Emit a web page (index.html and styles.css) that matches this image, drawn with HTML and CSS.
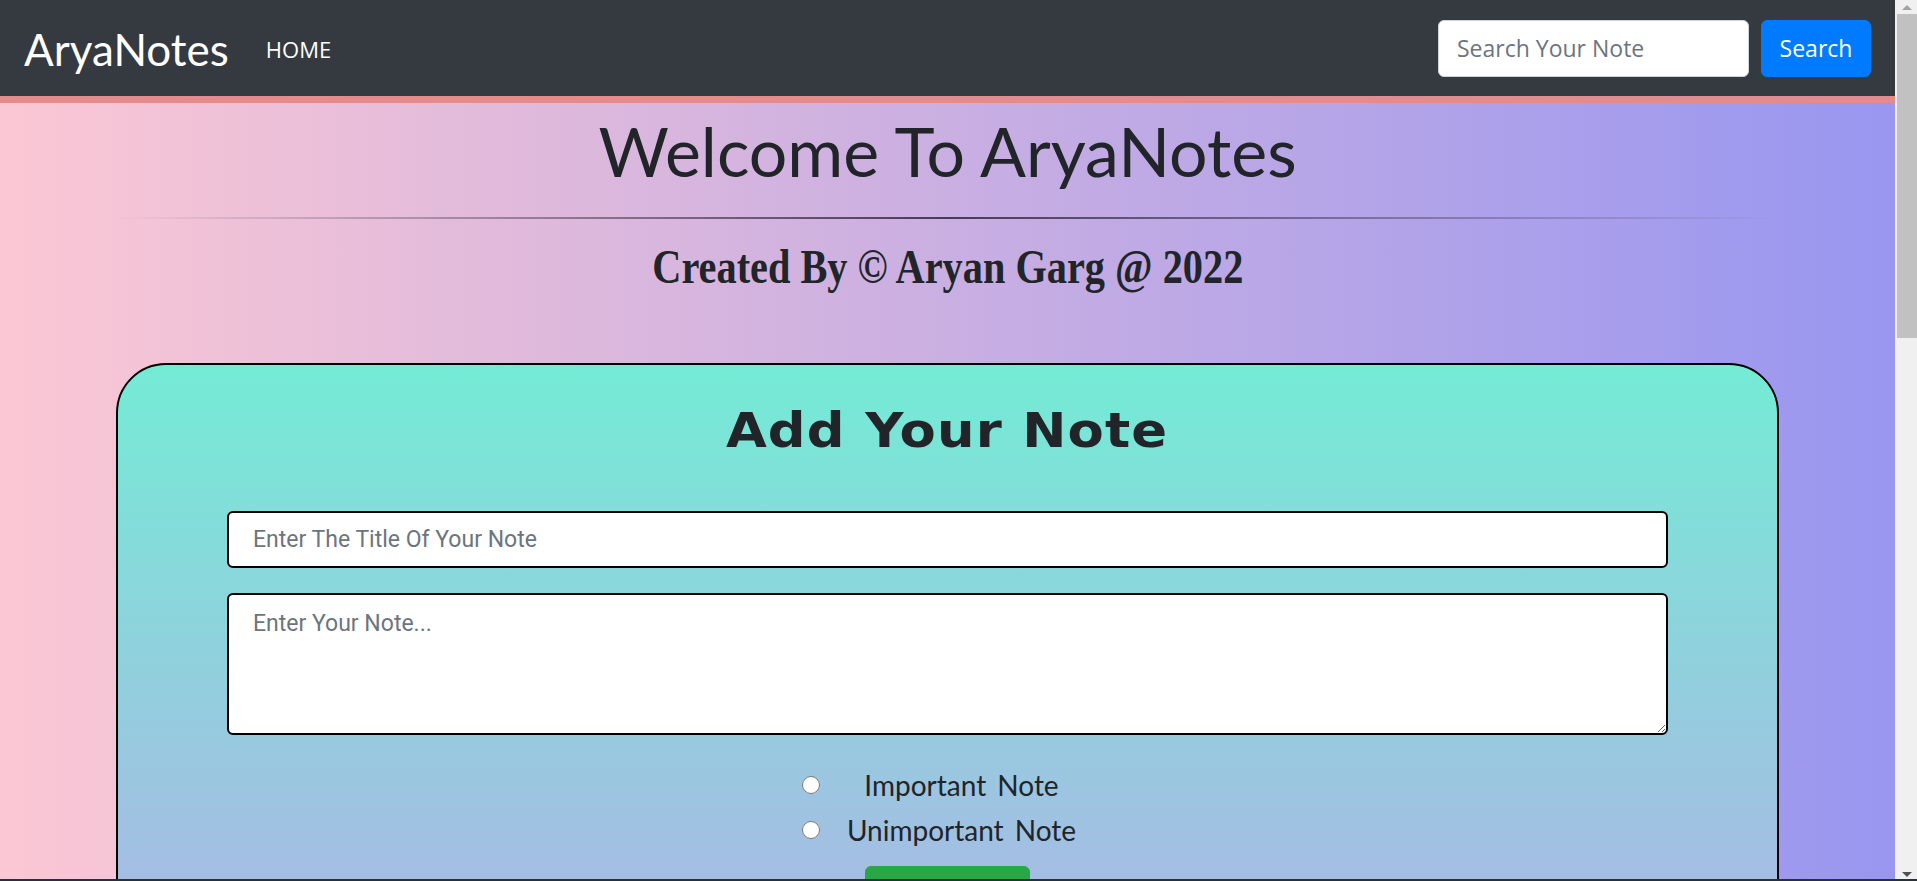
FILE: index.html
```html
<!DOCTYPE html>
<html lang="en">
<head>
<meta charset="utf-8">
<title>AryaNotes</title>
<link rel="stylesheet" href="styles.css">
</head>
<body>
<header class="navbar">
  <a class="brand" href="#">AryaNotes</a>
  <nav class="nav-links">
    <a class="nav-link" href="#">HOME</a>
  </nav>
  <form class="search-form">
    <input class="search-input" type="search" placeholder="Search Your Note">
    <button class="search-btn" type="button">Search</button>
  </form>
</header>

<main class="page">
  <section class="hero">
    <h1 class="hero-title">Welcome To AryaNotes</h1>
    <hr class="fancy-rule">
    <h2 class="hero-sub"><span class="hero-sub-text">Created By © Aryan Garg @ 2022</span></h2>
  </section>

  <section class="note-card">
    <h2 class="card-title"><span class="card-title-text">Add Your Note</span></h2>
    <input class="field title-field" type="text" placeholder="Enter The Title Of Your Note">
    <textarea class="field note-field" placeholder="Enter Your Note..."></textarea>
    <div class="radio-group">
      <label class="radio-row"><input class="radio" type="radio" name="imp"><span class="radio-label">Important Note</span></label>
      <label class="radio-row"><input class="radio" type="radio" name="imp"><span class="radio-label">Unimportant Note</span></label>
    </div>
    <div class="actions">
      <button class="add-btn" type="button">Add Note</button>
    </div>
  </section>

  <section class="notes-section">
    <h2 class="notes-title">Your Notes</h2>
    <div class="notes-grid">
      <article class="note-item"><h3 class="note-item-title">Shopping</h3><p class="note-item-text">Milk, bread and eggs.</p></article>
      <article class="note-item"><h3 class="note-item-title">Meeting</h3><p class="note-item-text">Project sync at 5 PM.</p></article>
      <article class="note-item"><h3 class="note-item-title">Ideas</h3><p class="note-item-text">Write a new blog post.</p></article>
    </div>
  </section>
</main>

<div class="fake-scrollbar" aria-hidden="true">
  <div class="sb-btn sb-up"><span class="sb-arrow-up"></span></div>
  <div class="sb-track"><div class="sb-thumb"></div></div>
  <div class="sb-btn sb-down"><span class="sb-arrow-down"></span></div>
</div>
<div class="window-edge" aria-hidden="true"></div>
</body>
</html>
```

FILE: styles.css
```css
* { box-sizing: border-box; }

html, body {
  margin: 0;
  padding: 0;
}

body {
  margin-right: 22px;
  background: linear-gradient(to right, #fbc7d4, #9796f0);
  font-family: "Open Sans", "Noto Sans", sans-serif;
  color: #212529;
}

/* ---------- fake classic scrollbar (window chrome) ---------- */
.fake-scrollbar {
  position: fixed;
  top: 0;
  right: 0;
  width: 22px;
  height: 100vh;
  background: #f0f0f0;
  display: flex;
  flex-direction: column;
  z-index: 10;
}

.sb-btn {
  height: 14px;
  display: flex;
  align-items: center;
  justify-content: center;
  padding-left: 2px;
}

.sb-arrow-up {
  width: 0;
  height: 0;
  border-left: 5px solid transparent;
  border-right: 5px solid transparent;
  border-bottom: 5px solid #a3a3a3;
}

.sb-arrow-down {
  width: 0;
  height: 0;
  border-left: 5px solid transparent;
  border-right: 5px solid transparent;
  border-top: 5px solid #505050;
}

.sb-track {
  flex: 1;
  padding-left: 2px;
}

.sb-thumb {
  height: 324px;
  background: #c1c1c1;
}

.window-edge {
  position: fixed;
  left: 0;
  right: 0;
  bottom: 0;
  height: 2px;
  background: #27313a;
  z-index: 11;
}

/* ---------- navbar ---------- */
.navbar {
  display: flex;
  align-items: center;
  height: 103px;
  padding: 0 24px;
  background: #343a40;
  border-bottom: 7px solid #e58b8b;
}

.brand {
  font-family: "Lato", sans-serif;
  font-size: 44px;
  color: #fff;
  text-decoration: none;
  line-height: 1;
  margin-top: 2px;
}

.nav-links {
  flex: 1;
  display: flex;
  margin-left: 37px;
}

.nav-link {
  font-family: "Open Sans", sans-serif;
  font-size: 22px;
  color: #fff;
  text-decoration: none;
  margin-top: 2px;
}

.search-form {
  display: flex;
  gap: 12px;
}

.search-input {
  width: 311px;
  height: 57px;
  padding: 0 18px;
  font-family: "Open Sans", sans-serif;
  font-size: 23px;
  color: #495057;
  background: #fff;
  border: 1px solid #ced4da;
  border-radius: 6px;
  outline: none;
}

.search-input::placeholder { color: #6c757d; }

.search-btn {
  width: 110px;
  height: 57px;
  font-family: "Open Sans", sans-serif;
  font-size: 23px;
  color: #fff;
  background: #007bff;
  border: 1px solid #007bff;
  border-radius: 6px;
}

/* ---------- hero ---------- */
.hero {
  padding: 7px 116px 0;
  text-align: center;
}

.hero-title {
  margin: 0;
  font-family: "Lato", sans-serif;
  font-weight: 400;
  font-size: 68px;
  line-height: 1.2;
  color: #212529;
}

.fancy-rule {
  margin: 25px 0 0;
  height: 2px;
  border: 0;
  background: linear-gradient(to right, rgba(0,0,0,0), rgba(40,30,50,0.8), rgba(0,0,0,0));
}

.hero-sub {
  margin: 19px 0 0;
  font-family: "Liberation Serif", serif;
  font-weight: 700;
  font-size: 48px;
  line-height: 1.2;
  color: #212529;
}

.hero-sub-text {
  display: inline-block;
  transform: scaleX(0.84);
}

/* ---------- card ---------- */
.note-card {
  margin: 68px 116px 0;
  padding: 37px 109px 37px;
  border: 2px solid #000;
  border-radius: 50px;
  background: linear-gradient(to bottom, #74ebd5, #acb6e5);
  display: flex;
  flex-direction: column;
}

.card-title {
  margin: 0;
  text-align: center;
  font-family: "DejaVu Sans", sans-serif;
  font-weight: 700;
  font-size: 48px;
  line-height: 1.2;
  letter-spacing: 1px;
  color: #212529;
}

.card-title-text {
  display: inline-block;
  transform: scaleX(1.1);
}

.field {
  width: 100%;
  font-family: "Roboto", sans-serif;
  font-size: 23px;
  color: #495057;
  background: #fff;
  border: 2px solid #000;
  border-radius: 6px;
  outline: none;
}

.field::placeholder { color: #6c757d; }

.title-field {
  margin-top: 51px;
  height: 57px;
  padding: 0 24px;
}

.note-field {
  margin-top: 25px;
  height: 142px;
  padding: 12px 24px;
  line-height: 1.5;
  resize: vertical;
}

.radio-group {
  margin-top: 28px;
  display: flex;
  flex-direction: column;
  align-items: center;
}

.radio-row {
  display: grid;
  grid-template-columns: 18px 264px;
  column-gap: 10px;
  align-items: center;
  height: 45px;
}

.radio {
  width: 18px;
  height: 18px;
  margin: 0;
}

.radio-label {
  text-align: center;
  font-family: "Lato", sans-serif;
  font-size: 28px;
  word-spacing: 4px;
  color: #212529;
}

.actions {
  margin-top: 13px;
  display: flex;
  justify-content: center;
}

.add-btn {
  width: 165px;
  height: 57px;
  font-family: "Open Sans", sans-serif;
  font-size: 23px;
  color: #fff;
  background: #28a745;
  border: 1px solid #28a745;
  border-radius: 6px;
}

/* ---------- notes ---------- */
.notes-section {
  margin: 80px 116px 0;
  padding-bottom: 980px;
}

.notes-title {
  margin: 0 0 30px;
  text-align: center;
  font-family: "DejaVu Sans", sans-serif;
  font-size: 44px;
}

.notes-grid {
  display: grid;
  grid-template-columns: repeat(3, 1fr);
  gap: 30px;
}

.note-item {
  padding: 24px;
  background: rgba(255,255,255,0.6);
  border: 2px solid #000;
  border-radius: 20px;
}

.note-item-title {
  margin: 0 0 10px;
  font-family: "Lato", sans-serif;
  font-size: 28px;
}

.note-item-text {
  margin: 0;
  font-family: "Roboto", sans-serif;
  font-size: 20px;
}
```
